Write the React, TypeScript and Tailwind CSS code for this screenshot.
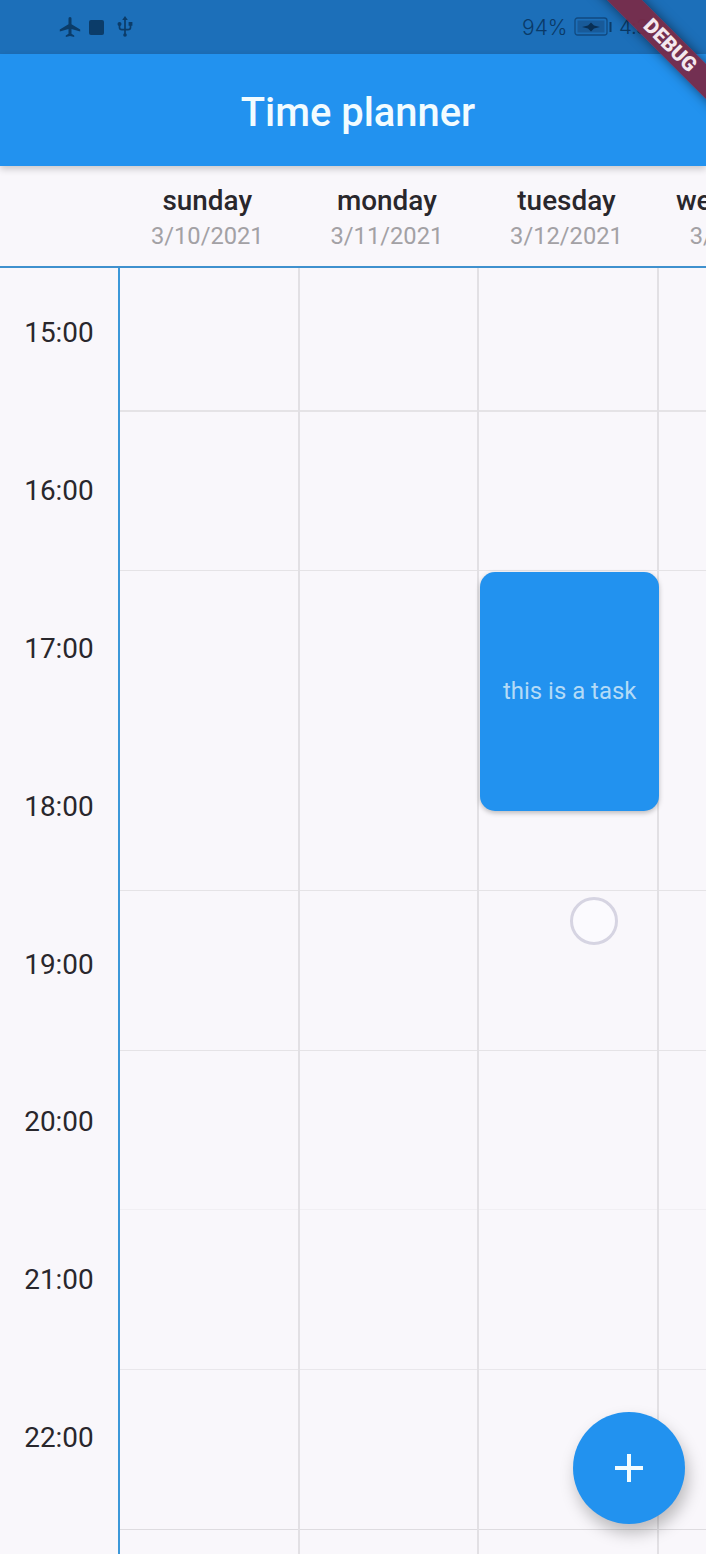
const days = [
  { name: 'sunday', date: '3/10/2021' },
  { name: 'monday', date: '3/11/2021' },
  { name: 'tuesday', date: '3/12/2021' },
  { name: 'wednesday', date: '3/13/2021' },
];

const hours = ['15:00', '16:00', '17:00', '18:00', '19:00', '20:00', '21:00', '22:00'];

function StatusBar() {
  return (
    <div className="flex h-[54px] shrink-0 items-center bg-[#1c6fb9] pl-[59px] text-[#0b3c69]">
      <svg className="size-[22px] shrink-0" viewBox="0 0 22 22" fill="currentColor">
        <path d="M11 1c-1 0-1.5.8-1.5 1.8v5.5L.8 13.6v2L9.500 13v4.700l-2.700 1.800V21l4.200-1.100 4.200 1.100v-1.500l-2.700-1.800V13l8.700 2.600v-2l-8.700-5.300V2.800C12.500 1.800 12 1 11 1z" />
      </svg>
      <div className="ml-2 size-[15px] shrink-0 rounded-[2px] bg-current" />
      <svg className="ml-[13px] h-[22px] w-4 shrink-0" viewBox="0 0 16 22" fill="none" stroke="currentColor" strokeWidth="1.700">
        <path d="M8 3v16M2.500 8v3.500c0 1.600 1 2.200 2.500 2.200h6c1.500 0 2.500-.8 2.500-2.200V8" />
        <circle cx="8" cy="19" r="1.800" fill="currentColor" stroke="none" />
        <circle cx="2.500" cy="8" r="2" fill="currentColor" stroke="none" />
        <path d="M8 0l2.800 4H5.200zM11.600 6h3.800v3.800h-3.800z" fill="currentColor" stroke="none" />
      </svg>
      <span className="ml-[389px] w-[46px] shrink-0 pt-px font-[Inter,sans-serif] text-[21px] font-light text-[#0a3a68]">94%</span>
      <svg className="ml-[6px] h-5 w-[38px] shrink-0" viewBox="0 0 38 20" fill="none">
        <rect x="1" y="1" width="32" height="17" rx="2.500" stroke="#114a80" strokeWidth="1.300" />
        <rect x="3.500" y="3.500" width="27" height="12" fill="#185a99" />
        <path d="M8 10l6-1.500 3-3 3 3 6 1.500-6 1.500-3 3-3-3z" fill="#082f55" />
        <path d="M36.500 5v10" stroke="currentColor" strokeWidth="2" />
      </svg>
      <span className="ml-[7px] shrink-0 pt-px font-[Inter,sans-serif] text-[20.500px] font-light tracking-[-0.8px] text-[#0a3a68]">4:30</span>
    </div>
  );
}

function Calendar() {
  return (
    <div className="flex min-h-0 grow">
      <div className="flex w-[120px] shrink-0 flex-col border-r-2 border-[#3c98d9] pt-[43.400px]">
        {hours.map((hour) => (
          <div key={hour} className="flex h-[157.8px] shrink-0 justify-center text-[27.900px] leading-[43px] text-[#29272c]">
            {hour}
          </div>
        ))}
      </div>
      <div className="flex min-w-0 grow overflow-hidden">
        {days.map((day) => (
          <div key={day.name} className="flex w-[179.6px] shrink-0 flex-col border-r-2 border-[#e2e0e4]">
            <div className="h-[143.5px] shrink-0 border-b-2 border-[#e5e3e6]" />
            <div className="h-[159.800px] shrink-0 border-b border-[#e5e3e6]" />
            {day.name === 'tuesday' ? (
              <div className="h-[319.500px] shrink-0 border-b border-[#e5e3e6]">
                <div className="relative mt-px ml-px flex h-[239px] w-[179px] items-center justify-center rounded-[15px] bg-[#2292ef] pt-px text-[23.900px] text-[#b4dbf7] shadow-[0_2px_5px_rgba(0,0,0,0.25)]">
                  this is a task
                </div>
              </div>
            ) : (
              <div className="h-[319.500px] shrink-0 border-b border-[#e5e3e6]" />
            )}
            <div className="h-[159.800px] shrink-0 border-b border-[#e5e3e6]" />
            <div className="h-[159.800px] shrink-0 border-b border-[#f1eff3]" />
            <div className="h-[159.800px] shrink-0 border-b border-[#e9e7eb]" />
            <div className="h-[159.800px] shrink-0 border-b border-[#dedce0]" />
          </div>
        ))}
      </div>
    </div>
  );
}

export default function App() {
  return (
    <div className="relative flex h-[1554px] w-[706px] flex-col overflow-hidden bg-[#f9f7fb] font-[Roboto,sans-serif]">
      <StatusBar />
      <header className="relative flex h-[112px] shrink-0 items-center justify-center bg-[#2292ef] pt-[5px] pl-[10px] text-[39.900px] font-medium text-[#f2fcff] shadow-[0_3px_7px_rgba(0,0,0,0.2)]">
        <h1>Time planner</h1>
      </header>
      <div className="flex h-[102px] shrink-0 overflow-hidden border-b-2 border-[#3f91ce] pl-[117.500px]">
        {days.map((day) => (
          <div key={day.name} className="flex w-[179.600px] shrink-0 flex-col items-center pt-[18px]">
            <span className="text-[27.900px] leading-[34px] font-medium text-[#29272c]">{day.name}</span>
            <span className="text-[23.700px] leading-[36px] text-[#a3a1a5]">{day.date}</span>
          </div>
        ))}
      </div>
      <Calendar />
      <div className="absolute top-[897px] left-[570px] size-[48px] rounded-full border-[3px] border-[#d6d4e2] bg-[#fbfafe]" />
      <button
        aria-label="Add task"
        className="absolute top-[1412px] left-[573px] flex size-[112px] items-center justify-center rounded-full bg-[#2292ef] shadow-[3px_9px_16px_rgba(0,0,0,0.25)]"
      >
        <svg className="size-7" viewBox="0 0 28 28" stroke="#f2fcff" strokeWidth="4">
          <path d="M14 0v28M0 14h28" />
        </svg>
      </button>
      <div className="absolute top-[33px] left-[569.500px] flex h-[25px] w-[200px] rotate-45 items-center justify-center bg-[#782b49]/95 text-[20.400px] leading-none font-black text-[#f4e8ee] shadow-[0_0_12px_rgba(0,0,0,0.5)]">
        DEBUG
      </div>
    </div>
  );
}
